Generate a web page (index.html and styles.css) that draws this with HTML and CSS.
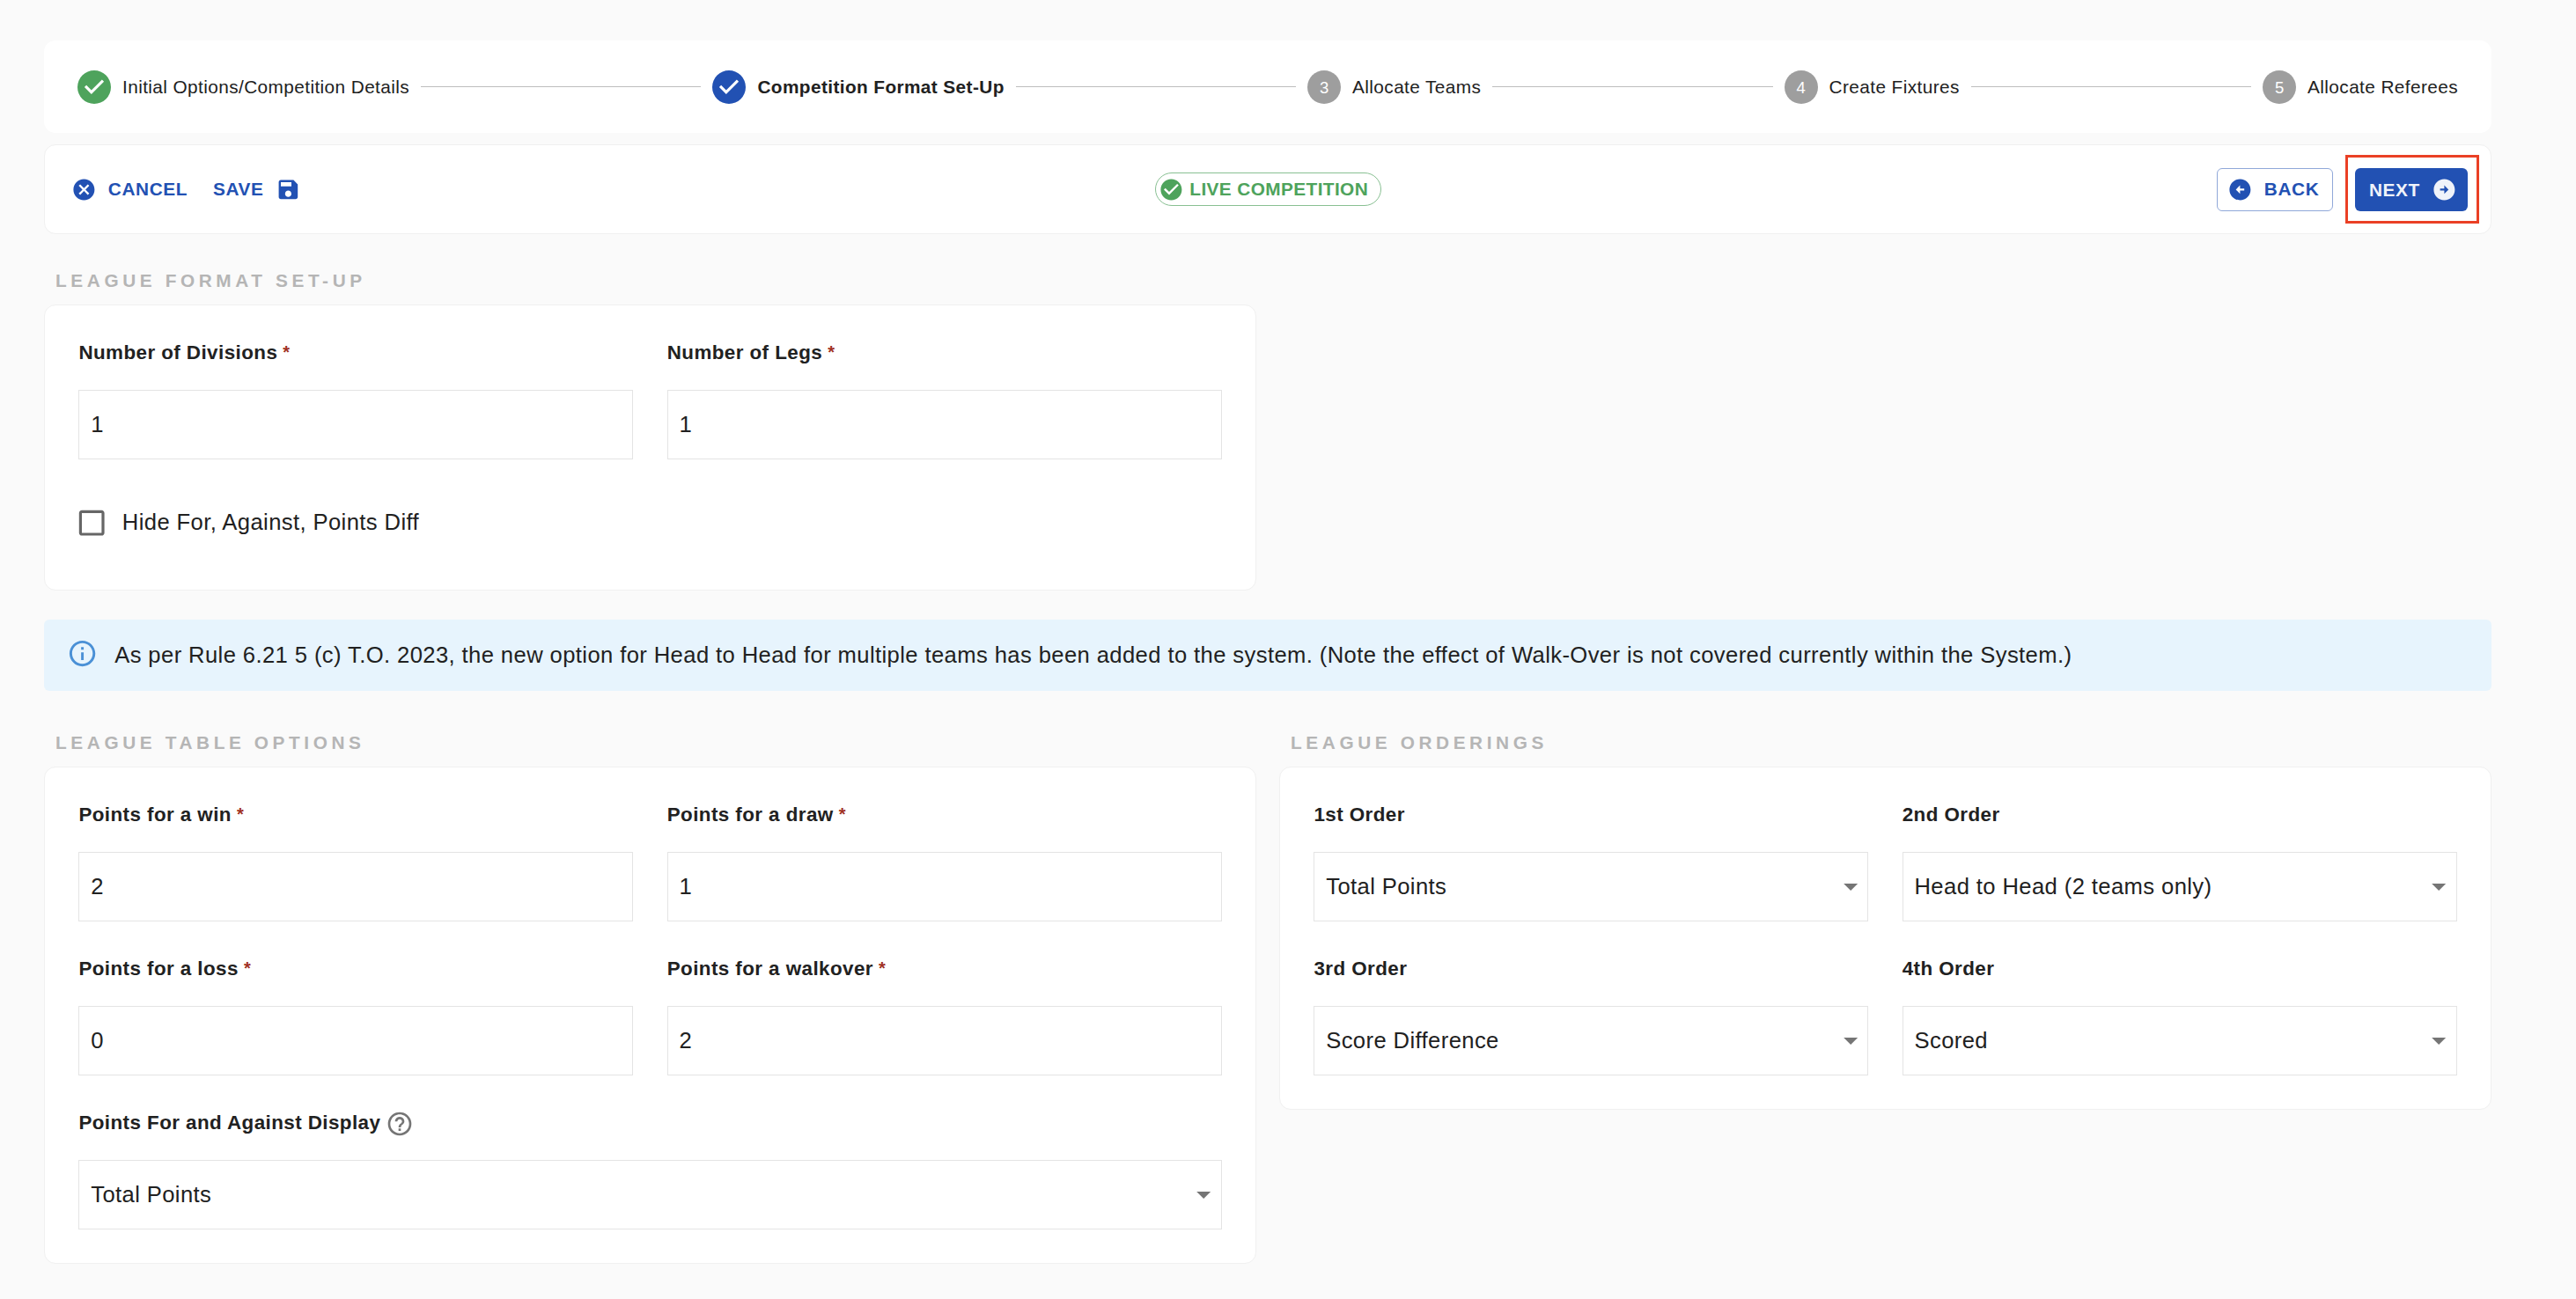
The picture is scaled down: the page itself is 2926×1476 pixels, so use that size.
FILE: index.html
```html
<!DOCTYPE html>
<html lang="en">
<head>
  <meta charset="UTF-8" />
  <meta name="viewport" content="width=device-width, initial-scale=1.0" />
  <title>Competition Format Set-Up</title>
  <link rel="stylesheet" href="styles.css">
</head>
<body>
  <div class="page">
    <div class="stepper">
      <div class="step">
        <svg class="step-icon done" viewBox="0 0 24 24"><path d="M12 0a12 12 0 1 0 0 24 12 12 0 0 0 0-24zm-2 17l-5-5 1.4-1.4 3.6 3.6 7.6-7.6L19 8l-9 9z"/></svg>
        <span>Initial Options/Competition Details</span>
      </div>
      <div class="line"></div>
      <div class="step active">
        <svg class="step-icon current" viewBox="0 0 24 24"><path d="M12 0a12 12 0 1 0 0 24 12 12 0 0 0 0-24zm-2 17l-5-5 1.4-1.4 3.6 3.6 7.6-7.6L19 8l-9 9z"/></svg>
        <span>Competition Format Set-Up</span>
      </div>
      <div class="line"></div>
      <div class="step">
        <span class="step-number">3</span>
        <span>Allocate Teams</span>
      </div>
      <div class="line"></div>
      <div class="step">
        <span class="step-number">4</span>
        <span>Create Fixtures</span>
      </div>
      <div class="line"></div>
      <div class="step">
        <span class="step-number">5</span>
        <span>Allocate Referees</span>
      </div>
    </div>

    <div class="toolbar">
      <div class="toolbar-left">
        <button type="button" class="btn">
          <svg class="icon" viewBox="0 0 24 24"><path d="M12 2C6.47 2 2 6.47 2 12s4.47 10 10 10 10-4.47 10-10S17.53 2 12 2zm5 13.59L15.59 17 12 13.41 8.41 17 7 15.59 10.59 12 7 8.41 8.41 7 12 10.59 15.59 7 17 8.41 13.41 12 17 15.59z"/></svg>
          CANCEL
        </button>
        <button type="button" class="btn">
          SAVE
          <svg class="icon" viewBox="0 0 24 24"><path d="M17 3H5c-1.11 0-2 .9-2 2v14c0 1.1.89 2 2 2h14c1.1 0 2-.9 2-2V7l-4-4zm-5 16c-1.66 0-3-1.34-3-3s1.34-3 3-3 3 1.34 3 3-1.34 3-3 3zm3-10H5V5h10v4z"/></svg>
        </button>
      </div>
      <div class="chip">
        <svg class="icon" viewBox="0 0 24 24"><path d="M12 2C6.48 2 2 6.48 2 12s4.48 10 10 10 10-4.48 10-10S17.52 2 12 2zm-2 15l-5-5 1.41-1.41L10 14.17l7.59-7.59L19 8l-9 9z"/></svg>
        <span>LIVE COMPETITION</span>
      </div>
      <div class="toolbar-right">
        <button type="button" class="btn outlined">
          <svg class="icon" viewBox="0 0 24 24"><path d="M2 12c0 5.52 4.48 10 10 10s10-4.48 10-10S17.52 2 12 2 2 6.48 2 12zm10-1h4v2h-4v3l-4-4 4-4v3z"/></svg>
          BACK
        </button>
        <div class="highlight">
          <button type="button" class="btn filled">
            NEXT
            <svg class="icon" viewBox="0 0 24 24"><path d="M22 12c0-5.52-4.48-10-10-10S2 6.48 2 12s4.48 10 10 10 10-4.48 10-10zm-10 1H8v-2h4V8l4 4-4 4v-3z"/></svg>
          </button>
        </div>
      </div>
    </div>

    <div class="columns">
      <div class="section">
        <h2>LEAGUE FORMAT SET-UP</h2>
        <div class="card">
          <div class="field">
            <label for="divisions">Number of Divisions <b>*</b></label>
            <input type="text" id="divisions" value="1" />
          </div>
          <div class="field">
            <label for="legs">Number of Legs <b>*</b></label>
            <input type="text" id="legs" value="1" />
          </div>
          <label class="check full">
            <svg class="check-box" viewBox="0 0 24 24"><path d="M19 5v14H5V5h14m0-2H5c-1.1 0-2 .9-2 2v14c0 1.1.9 2 2 2h14c1.1 0 2-.9 2-2V5c0-1.1-.9-2-2-2z"/></svg>
            <span>Hide For, Against, Points Diff</span>
          </label>
        </div>
      </div>
    </div>

    <div class="alert">
      <svg viewBox="0 0 24 24"><path d="M11 7h2v2h-2zm0 4h2v6h-2zm1-9C6.48 2 2 6.48 2 12s4.48 10 10 10 10-4.48 10-10S17.52 2 12 2zm0 18c-4.41 0-8-3.59-8-8s3.59-8 8-8 8 3.59 8 8-3.59 8-8 8z"/></svg>
      <span>As per Rule 6.21 5 (c) T.O. 2023, the new option for Head to Head for multiple teams has been added to the system. (Note the effect of Walk-Over is not covered currently within the System.)</span>
    </div>

    <div class="columns">
      <div class="section">
        <h2>LEAGUE TABLE OPTIONS</h2>
        <div class="card">
          <div class="field">
            <label for="win">Points for a win <b>*</b></label>
            <input type="text" id="win" value="2" />
          </div>
          <div class="field">
            <label for="draw">Points for a draw <b>*</b></label>
            <input type="text" id="draw" value="1" />
          </div>
          <div class="field">
            <label for="loss">Points for a loss <b>*</b></label>
            <input type="text" id="loss" value="0" />
          </div>
          <div class="field">
            <label for="walkover">Points for a walkover <b>*</b></label>
            <input type="text" id="walkover" value="2" />
          </div>
          <div class="field full">
            <label>
              <span>Points For and Against Display</span>
              <svg class="help" viewBox="0 0 24 24"><path d="M11 18h2v-2h-2v2zm1-16C6.48 2 2 6.48 2 12s4.48 10 10 10 10-4.48 10-10S17.52 2 12 2zm0 18c-4.41 0-8-3.59-8-8s3.59-8 8-8 8 3.59 8 8-3.59 8-8 8zm0-14c-2.21 0-4 1.79-4 4h2c0-1.1.9-2 2-2s2 .9 2 2c0 2-3 1.75-3 5h2c0-2.25 3-2.5 3-5 0-2.21-1.79-4-4-4z"/></svg>
            </label>
            <div class="select">Total Points <svg viewBox="0 0 24 24"><path d="M7 10l5 5 5-5z"/></svg></div>
          </div>
        </div>
      </div>

      <div class="section">
        <h2>LEAGUE ORDERINGS</h2>
        <div class="card">
          <div class="field">
            <label>1st Order</label>
            <div class="select">Total Points <svg viewBox="0 0 24 24"><path d="M7 10l5 5 5-5z"/></svg></div>
          </div>
          <div class="field">
            <label>2nd Order</label>
            <div class="select">Head to Head (2 teams only) <svg viewBox="0 0 24 24"><path d="M7 10l5 5 5-5z"/></svg></div>
          </div>
          <div class="field">
            <label>3rd Order</label>
            <div class="select">Score Difference <svg viewBox="0 0 24 24"><path d="M7 10l5 5 5-5z"/></svg></div>
          </div>
          <div class="field">
            <label>4th Order</label>
            <div class="select">Scored <svg viewBox="0 0 24 24"><path d="M7 10l5 5 5-5z"/></svg></div>
          </div>
        </div>
      </div>
    </div>
  </div>
</body>
</html>
```
FILE: styles.css
```css
* {
  box-sizing: border-box;
}
body {
  margin: 0;
  background-color: #fafafa;
  color: #212121;
  font-family: "Liberation Sans", Arial, sans-serif;
  font-size: 25.6px;
  letter-spacing: 0.4px;
}
svg {
  display: block;
  flex: none;
  fill: currentColor;
}
.page {
  width: 2780px;
  margin: 46px 0 0 50px;
}

/* stepper */
.stepper {
  display: flex;
  align-items: center;
  gap: 13px;
  height: 105px;
  padding: 0 38px;
  background: #fff;
  border-radius: 13px;
}
.step {
  display: flex;
  align-items: center;
  gap: 13px;
  font-size: 20.8px;
  letter-spacing: 0.4px;
  white-space: nowrap;
}
.step.active {
  font-weight: bold;
}
.step-icon, .step-number {
  width: 38px;
  height: 38px;
}
.done {
  color: #4ea35c;
}
.current {
  color: #2251b3;
}
.step-number {
  border-radius: 50%;
  background: #9e9e9e;
  color: #fff;
  font-size: 18.5px;
  line-height: 39px;
  letter-spacing: 0;
  text-align: center;
}
.line {
  flex: 1;
  height: 1px;
  background: #bdbdbd;
}

/* toolbar */
.toolbar {
  display: grid;
  grid-template-columns: 1fr auto 1fr;
  align-items: center;
  height: 102px;
  margin-top: 13px;
  padding: 0 13px 0 30px;
  background: #fff;
  border: 1px solid #f0f0f0;
  border-radius: 13px;
}
.toolbar-left, .toolbar-right {
  display: flex;
  align-items: center;
}
.toolbar-left {
  gap: 29px;
}
.toolbar-right {
  justify-content: flex-end;
  gap: 14px;
}
.btn {
  display: flex;
  align-items: center;
  gap: 13px;
  height: 49px;
  padding: 0;
  background: none;
  border: none;
  border-radius: 6px;
  color: #2251b3;
  font-family: inherit;
  font-size: 20.8px;
  font-weight: bold;
  letter-spacing: 0.6px;
  cursor: pointer;
}
.btn.outlined {
  width: 132px;
  padding: 0 11px;
  border: 1px solid #90a8d9;
}
.btn.filled {
  width: 128px;
  padding: 0 0 0 16px;
  background: #2251b3;
  color: #f0f3fa;
}
.highlight {
  padding: 12px 10px 11px 8px;
  border: 3px solid #ea4025;
}
.icon {
  width: 28.8px;
  height: 28.8px;
}
.chip {
  display: flex;
  align-items: center;
  gap: 7px;
  width: 257px;
  height: 38px;
  margin-right: 17px;
  padding-left: 3px;
  border: 1px solid #88c092;
  border-radius: 19px;
  color: #4ea35c;
  font-size: 20.8px;
  font-weight: bold;
  letter-spacing: 0.4px;
  white-space: nowrap;
}

/* sections */
.columns {
  display: grid;
  grid-template-columns: 1fr 1fr;
  align-items: start;
  gap: 26px;
}
h2 {
  margin: 0;
  padding: 41px 13px 15px;
  color: #b5b5b5;
  font-size: 20.8px;
  line-height: 24px;
  letter-spacing: 4.6px;
}
.card {
  display: grid;
  grid-template-columns: 1fr 1fr;
  gap: 38.4px;
  padding: 38.4px;
  background: #fff;
  border: 1px solid #f0f0f0;
  border-radius: 13px;
}
.full {
  grid-column: span 2;
}
.field label {
  display: flex;
  align-items: center;
  gap: 6px;
  height: 29px;
  padding-top: 2px;
  margin-bottom: 28.6px;
  font-size: 22.4px;
  font-weight: bold;
  letter-spacing: 0.43px;
}
.field b {
  color: #a03022;
  font-size: 20px;
}
.field input, .select {
  display: flex;
  align-items: center;
  justify-content: space-between;
  width: 100%;
  height: 79px;
  padding: 0 0 0 12.8px;
  background: #fff;
  border: 1px solid #e4e4e4;
  border-radius: 0;
  color: #212121;
  font: inherit;
  letter-spacing: 0.4px;
}
.select svg {
  width: 38.4px;
  height: 38.4px;
  color: #757575;
}
.help {
  width: 32px;
  height: 32px;
  margin-top: 2px;
}
.field .help {
  color: #757575;
}
.check {
  display: flex;
  align-items: center;
  gap: 15px;
  height: 66px;
  margin: 0 0 5px -4px;
}
.check-box {
  width: 38.4px;
  height: 38.4px;
  margin-top: 1px;
  color: #666;
}

/* rule notice */
.alert {
  display: flex;
  align-items: center;
  gap: 19px;
  height: 81px;
  margin: 33px 0 6px;
  padding-left: 26px;
  background: #e7f4fd;
  border-radius: 6px;
  white-space: nowrap;
}
.alert svg {
  width: 35.2px;
  height: 35.2px;
  margin-bottom: 4px;
  color: #4a90d6;
}
```
